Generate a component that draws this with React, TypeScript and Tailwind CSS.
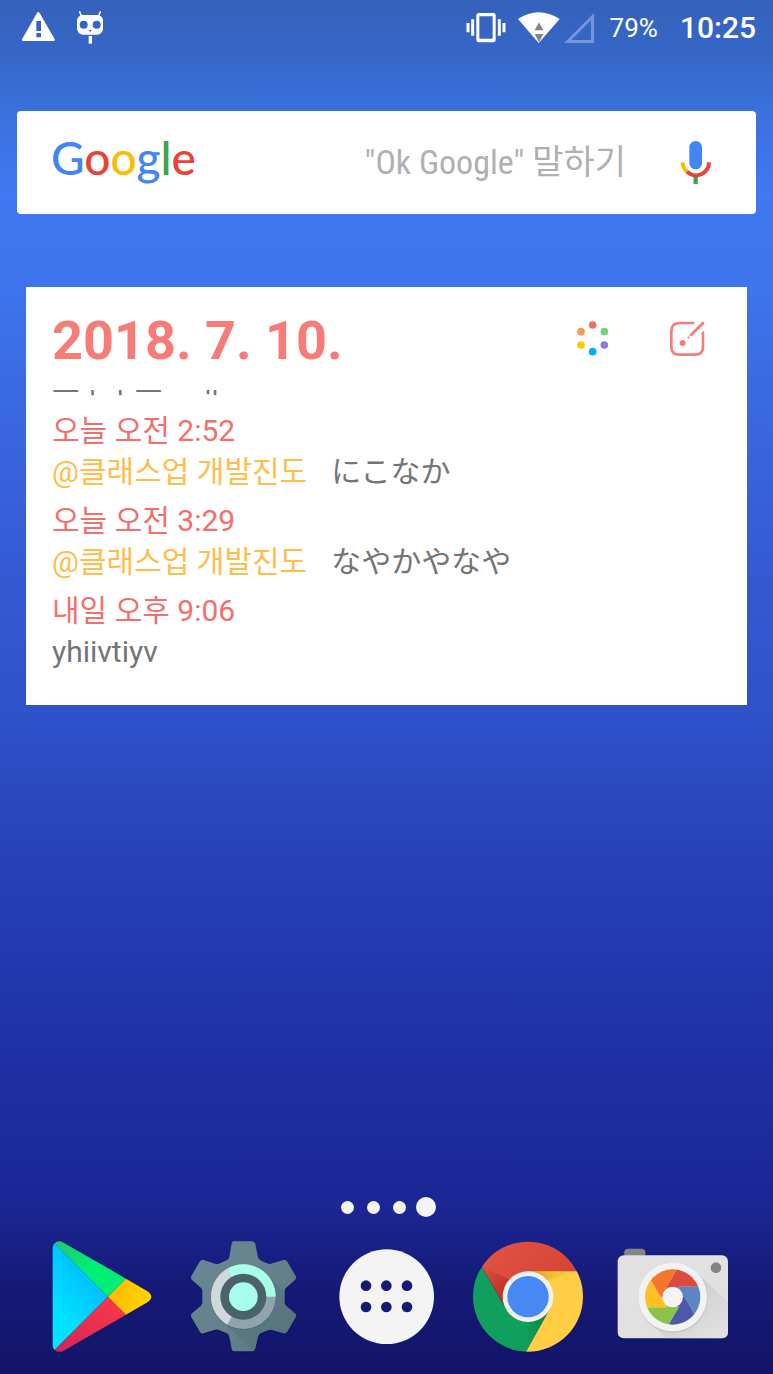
import React from "react";

type Memo = { time?: string; tag?: string; body: string };

const memos: Memo[] = [
  { body: "요ㅏㅏ요ㅡ ㅐ" },
  { time: "오늘 오전 2:52", tag: "@클래스업 개발진도", body: "にこなか" },
  { time: "오늘 오전 3:29", tag: "@클래스업 개발진도", body: "なやかやなや" },
  { time: "내일 오후 9:06", body: "yhiivtiyv" },
];

function StatusBar() {
  return (
    <header className="flex h-[54px] items-center pl-[22px] pr-[17px] text-white">
      <svg className="h-[34px] w-[34px]" viewBox="66 30 102 102" aria-label="Warning">
        <path d="M111 39q4-6 8 0l45 79q2 5-4 5H70q-6 0-4-5z" fill="#fff" />
        <path d="M109 63h14v30h-14zM109 99h14v13h-14z" fill="#3565c4" />
      </svg>
      <svg className="ml-[18px] h-[35px] w-8" viewBox="222 30 96 105" aria-label="System">
        <path d="M239 35l5 13M301 35l-5 13" stroke="#fff" strokeWidth="4.5" strokeLinecap="round" />
        <path d="M251 45h39c12 0 19 7 19 18v20c0 14-8 21-21 21h-36c-13 0-21-7-21-21V63c0-11 8-18 20-18z" fill="#fff" />
        <circle cx="251" cy="74" r="12" fill="#3565c4" />
        <circle cx="290" cy="74" r="12" fill="#3565c4" />
        <path d="M266 91h9l-4.500 4z" fill="#3565c4" stroke="#3565c4" />
        <path d="M266 108h10v23h-10z" fill="#fff" />
      </svg>
      <svg className="ml-auto h-[33px] w-10" viewBox="48 30 120 99" aria-label="Vibrate">
        <path d="M86 36h44q7 0 7 7v74q0 7-7 7H86q-7 0-7-7V43q0-7 7-7zM88 46v67h40V46z" fill="#fff" fillRule="evenodd" />
        <path d="M54 66v28M68 55v49M148 55v49M162 66v28" stroke="#fff" strokeWidth="9" />
      </svg>
      <svg className="ml-3 h-[33px] w-[42px]" viewBox="204 30 126 99" aria-label="Wi-Fi">
        <path d="M204 54q62-40 125 0l-63 72z" fill="#fff" />
        <path d="M254 88l13-24 13 24zM254 99h26l-13 25z" fill="#858585" />
      </svg>
      <svg className="ml-1 h-[33px] w-[31px]" viewBox="342 30 93 99" aria-label="No signal">
        <path d="M353 121.500L427.500 47v74.500z" fill="none" stroke="#7694d8" strokeWidth="9" />
      </svg>
      <div className="ml-[15px] flex items-center gap-[22px] pt-0.5 leading-8">
        <span className="text-[26px]">79%</span>
        <span className="text-[30px] font-medium">10:25</span>
      </div>
    </header>
  );
}

function SearchBar() {
  return (
    <section className="mx-[17px] mt-[57px] flex h-[103px] items-center rounded bg-white pl-[34px] pr-[44px]">
      <a href="#google" aria-label="Google" className="pb-2.5 font-['Lato'] text-[46px] font-medium leading-[60px]">
        <span className="text-[#4285f4]">G</span>
        <span className="text-[#ea4335]">o</span>
        <span className="text-[#fbbc05]">o</span>
        <span className="text-[#4285f4]">g</span>
        <span className="text-[#34a853]">l</span>
        <span className="text-[#ea4335]">e</span>
      </a>
      <button className="ml-auto pb-0.5 font-['Roboto_Condensed','Roboto','Noto_Sans_CJK_KR',sans-serif] text-[34px] leading-[44px] text-[#b0b0b0]">
        "Ok Google" 말하기
      </button>
      <button aria-label="Voice search" className="ml-[53px]">
        <svg className="h-[45px] w-[33px]" viewBox="987 120 99 135">
          <rect x="1018" y="123" width="38" height="85" rx="19" fill="#4285f4" />
          <path d="M1037 230v22" stroke="#34a853" strokeWidth="13" />
          <path d="M998 187a39 39 0 0 0 13 28" fill="none" stroke="#fbbc05" strokeWidth="12" />
          <path d="M1011 215A39 39 0 0 0 1077 187" fill="none" stroke="#ea4335" strokeWidth="12" />
        </svg>
      </button>
    </section>
  );
}

function MemoWidget() {
  return (
    <section className="mx-[26px] mt-[73px] flex h-[418px] flex-col bg-white pb-[33px] pl-[26px] pr-[42px]">
      <div className="flex h-[103px] items-center">
        <h1 className="pt-1 text-[54px] font-bold leading-[54px] text-[#f67c78]">2018. 7. 10.</h1>
        <button aria-label="Colors" className="ml-auto">
          <svg className="h-[37px] w-[33px]" viewBox="108 120 99 111">
            <circle cx="158" cy="135" r="11.500" fill="#f36d6b" />
            <circle cx="193" cy="155" r="11.500" fill="#75d17c" />
            <circle cx="193" cy="195" r="11.500" fill="#9278dc" />
            <circle cx="158" cy="215" r="11.500" fill="#00adff" />
            <circle cx="123" cy="195" r="11.500" fill="#ffcb00" />
            <circle cx="123" cy="155" r="11.500" fill="#f99858" />
          </svg>
        </button>
        <button aria-label="Write" className="ml-[60px]">
          <svg className="h-9 w-9" viewBox="387 122 108 108" fill="none" stroke="#f67c78" strokeLinecap="round">
            <path d="M459 128h-40q-25 0-25 25v46q0 24 25 24h45q25 0 25-24v-42" strokeWidth="8" />
            <path d="M453 164l36-36" strokeWidth="8" />
            <path d="M445 171l1 1" strokeWidth="6" />
            <circle cx="428" cy="188" r="9" fill="#f67c78" stroke="none" />
          </svg>
        </button>
      </div>
      <ul className="flex min-h-0 flex-1 flex-col justify-end gap-2 overflow-hidden text-[30px] leading-[41px]">
        {memos.map((memo, i) => (
          <li key={i} className="shrink-0 text-[#757575]">
            {memo.time && <p className="text-[#f36f6c]">{memo.time}</p>}
            <p className="flex gap-6">
              {memo.tag && <span className="text-[#ffbd4a]">{memo.tag}</span>}
              <span>{memo.body}</span>
            </p>
          </li>
        ))}
      </ul>
    </section>
  );
}

function PlayIcon() {
  return (
    <svg className="size-[114px]" viewBox="43 60 342 342">
      <defs>
        <linearGradient id="playBlue" x1="0" y1="1" x2="0.600" y2="0">
          <stop offset="0.300" stopColor="#00e2ff" />
          <stop offset="1" stopColor="#00b4ff" />
        </linearGradient>
        <linearGradient id="playRed" x1="1" y1="0" x2="0" y2="1">
          <stop offset="0" stopColor="#ff3a44" />
          <stop offset="1" stopColor="#d0255c" />
        </linearGradient>
        <linearGradient id="playYellow" x1="0" x2="1">
          <stop offset="0" stopColor="#ffbc00" />
          <stop offset="1" stopColor="#ffd400" />
        </linearGradient>
        <linearGradient id="playGreen" x1="0" y1="0" x2="1" y2="1">
          <stop offset="0" stopColor="#21c76c" />
          <stop offset="0.500" stopColor="#00f076" />
        </linearGradient>
      </defs>
      <path d="M76 391q8 8 26 1l252-142q24-18 0-37L102 70" fill="#0b0f4d" opacity="0.500" />
      <path d="M75 70q-6 5-6 14v292q0 9 6 14l160-160z" fill="url(#playBlue)" />
      <path d="M75 70q11-11 27-2l187 108-54 54z" fill="url(#playGreen)" />
      <path d="M75 390q11 10 27 2l187-108-54-54z" fill="url(#playRed)" />
      <path d="M289 176l62 36q28 18 0 36l-62 36-54-54z" fill="url(#playYellow)" />
    </svg>
  );
}

function SettingsIcon() {
  const gear =
    "M195 64h51q8 0 10 8l8 40q3 7 9 10l22 9q5 2 12-1l33-10q7-2 12 5l25 43q3 7-2 12l-27 24q-4 4-4 10v32q0 7 4 11l27 23q5 5 2 12l-25 43q-5 7-12 5l-34-10q-6-2-12 1l-21 8q-7 4-9 11l-8 36q-2 8-10 8h-51q-9 0-10-8l-7-36q-2-7-8-10l-23-10q-6-3-12-1l-34 11q-7 2-11-4l-26-44q-3-7 2-12l27-23q4-4 4-11v-32q0-6-4-10l-27-24q-5-5-2-12l26-44q4-6 11-4l34 11q6 2 12 0l23-10q6-3 8-10l7-40q1-8 10-8z";
  return (
    <svg className="size-[114px]" viewBox="51 60 342 342">
      <defs>
        <linearGradient id="gearFill" x1="0" y1="0" x2="1" y2="1">
          <stop offset="0" stopColor="#6b8994" />
          <stop offset="1" stopColor="#5d7984" />
        </linearGradient>
        <clipPath id="gearClip">
          <path d={gear} />
        </clipPath>
      </defs>
      <path d={gear} fill="#0c1048" opacity="0.500" transform="translate(0 4)" />
      <path d={gear} fill="url(#gearFill)" />
      <path d="M151 298l69-68 75-62 140 140-120 150z" fill="#455f69" opacity="0.220" clipPath="url(#gearClip)" />
      <circle cx="220" cy="232" r="98" fill="#4a626b" opacity="0.600" />
      <circle cx="220" cy="230" r="97" fill="#91a4ae" />
      <path d="M123 230A97 97 0 0 0 171.500 314L220 230 171.500 146A97 97 0 0 0 123 230z" fill="#cfd8dc" />
      <path d="M220 230L171.500 146A97 97 0 0 1 317 230z" fill="#a7ffeb" />
      <circle cx="220" cy="230" r="69" fill="#4b626b" />
      <circle cx="220" cy="230" r="43" fill="#a7ffeb" />
    </svg>
  );
}

function AppsIcon() {
  return (
    <svg className="size-[114px]" viewBox="27 180 342 342">
      <circle cx="200" cy="350" r="142" fill="#f4f4f4" />
      <g fill="#161a77">
        <circle cx="138" cy="317" r="16" />
        <circle cx="199" cy="317" r="16" />
        <circle cx="261" cy="317" r="16" />
        <circle cx="138" cy="381" r="16" />
        <circle cx="199" cy="381" r="16" />
        <circle cx="261" cy="381" r="16" />
      </g>
    </svg>
  );
}

function ChromeIcon() {
  return (
    <svg className="size-[114px]" viewBox="36 60 342 342">
      <defs>
        <clipPath id="chromeClip">
          <circle cx="204" cy="230" r="165" />
        </clipPath>
        <linearGradient id="chromeRed" x1="0" y1="0" x2="1" y2="0.400">
          <stop offset="0" stopColor="#e15548" />
          <stop offset="1" stopColor="#d64334" />
        </linearGradient>
        <linearGradient id="redShade" x1="0" y1="0" x2="1" y2="1">
          <stop offset="0" stopColor="#b7281f" stopOpacity="0" />
          <stop offset="1" stopColor="#b7281f" />
        </linearGradient>
        <linearGradient id="yellowShade" x1="0" x2="1">
          <stop offset="0" stopColor="#d79a1c" />
          <stop offset="1" stopColor="#ffce40" stopOpacity="0.300" />
        </linearGradient>
        <linearGradient id="greenShade" x1="1" y1="0" x2="0" y2="1">
          <stop offset="0" stopColor="#08753c" />
          <stop offset="1" stopColor="#0f9d58" stopOpacity="0" />
        </linearGradient>
      </defs>
      <circle cx="204" cy="233" r="165" fill="#090d48" opacity="0.550" />
      <g clipPath="url(#chromeClip)">
        <path d="M36 60h342v94H204L130 250 66 142 36 90z" fill="url(#chromeRed)" />
        <path d="M66 142l73 126 65 38 63-35-70 125H20V100z" fill="#109f5c" />
        <path d="M204 154h180v250H193l76-136z" fill="#ffce44" />
        <path d="M66 142l64 110q-2-44 24-71z" fill="url(#redShade)" />
        <path d="M204 154h149l-90 27z" fill="url(#yellowShade)" />
        <path d="M266 271l-69 125 10-92q34-4 59-33z" fill="url(#greenShade)" />
      </g>
      <circle cx="204" cy="230" r="76" fill="#f1f1f1" />
      <circle cx="204" cy="230" r="62" fill="#4688f4" />
    </svg>
  );
}

function CameraIcon() {
  return (
    <svg className="size-[114px]" viewBox="45 60 342 342">
      <defs>
        <clipPath id="lensClip">
          <circle cx="218" cy="231" r="83" />
        </clipPath>
        <linearGradient id="bodyShade" x1="0" y1="0" x2="1" y2="1">
          <stop offset="0.300" stopColor="#bdbdbd" />
          <stop offset="0.900" stopColor="#e0e0e0" />
        </linearGradient>
      </defs>
      <path d="M73 110V97q0-11 11-11h41q11 0 11 11v13z" fill="#858585" />
      <rect x="53" y="110" width="331" height="248" rx="18" fill="#080b42" opacity="0.700" />
      <rect x="53" y="106" width="331" height="249" rx="18" fill="#e1e1e1" />
      <path d="M145 303l146-144 93 88v90q0 18-18 18H197z" fill="url(#bodyShade)" opacity="0.600" />
      <circle cx="348" cy="143" r="16" fill="#858585" />
      <circle cx="219" cy="235" r="104" fill="#bcbcbc" opacity="0.600" />
      <circle cx="218" cy="231" r="103" fill="#f2f2f2" />
      <g clipPath="url(#lensClip)">
        <path d="M218 231L200 200 250 114H340V200H236z" fill="#dc4b40" />
        <path d="M218 231L236 200H340V328H310L254 231z" fill="#5b85c5" />
        <path d="M218 231H254L310 328 186 348 236 262z" fill="#4c59aa" />
        <path d="M218 231L236 262 186 348H90V262H200z" fill="#8bc34a" />
        <path d="M218 231L200 262H90V138H128L182 231z" fill="#fdc126" />
        <path d="M218 231H182L128 138V114H250L200 200z" fill="#f5772f" />
      </g>
      <circle cx="218" cy="231" r="31" fill="#f4f4f4" />
    </svg>
  );
}

const dock = [
  { name: "Play Store", Icon: PlayIcon },
  { name: "Settings", Icon: SettingsIcon },
  { name: "Apps", Icon: AppsIcon },
  { name: "Chrome", Icon: ChromeIcon },
  { name: "Camera", Icon: CameraIcon },
];

export default function App() {
  return (
    <main className="flex min-h-screen flex-col bg-[linear-gradient(180deg,#3561bb_0%,#3667c8_4%,#3b70dd_8%,#3f78f2_14%,#3e75ee_20%,#3a68df_30%,#345ad2_42%,#2e52c8_52%,#253eb5_65%,#1f2fa3_78%,#1b2694_88%,#151974_94%,#13156a_100%)] font-['Roboto','Noto_Sans_CJK_KR','Noto_Sans_CJK_JP',sans-serif]">
      <StatusBar />
      <SearchBar />
      <MemoWidget />
      <footer className="mt-auto pb-5 pt-10">
        <nav aria-label="Pages" className="flex h-5 items-center justify-center">
          {[0, 1, 2, 3].map((page) => (
            <button key={page} aria-label={`Page ${page + 1}`} className="flex w-[26px] justify-center">
              <span className={page === 3 ? "size-5 rounded-full bg-[#f4f4f4]" : "size-[13px] rounded-full bg-[#f4f4f4]"} />
            </button>
          ))}
        </nav>
        <nav aria-label="Favorites" className="mt-[23px] grid grid-cols-5 px-[30px]">
          {dock.map(({ name, Icon }) => (
            <button key={name} aria-label={name} className="flex justify-center">
              <Icon />
            </button>
          ))}
        </nav>
      </footer>
    </main>
  );
}
